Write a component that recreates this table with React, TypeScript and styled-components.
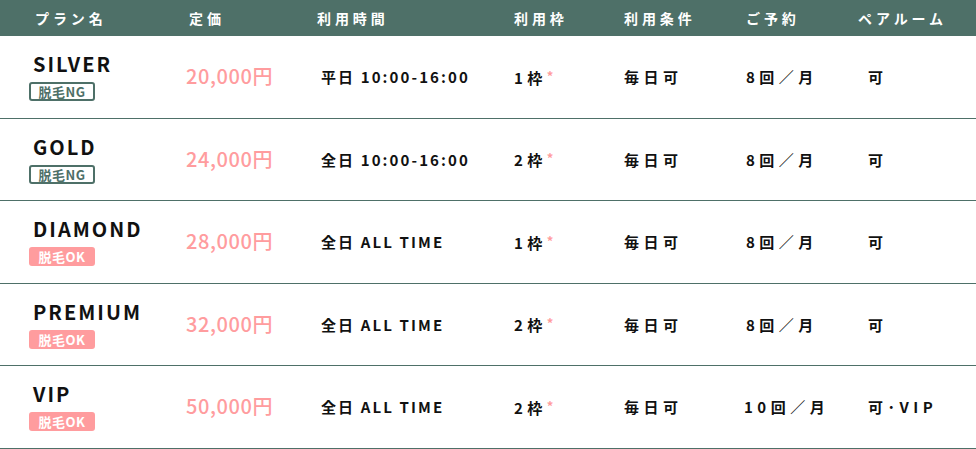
import React from 'react';
import styled, { createGlobalStyle } from 'styled-components';

const GlobalStyle = createGlobalStyle`
  html, body {
    margin: 0;
    padding: 0;
    background: #ffffff;
  }
  body {
    font-family: "Noto Sans CJK JP", "Noto Sans", sans-serif;
    color: #111111;
  }
`;

const green = '#4e7068';
const pink = '#ff9c9e';

const cols = '186px 131px 193px 110px 124px 111px 1fr';

const Table = styled.div`
  width: 976px;
`;

const HeadRow = styled.div`
  display: grid;
  grid-template-columns: ${cols};
  height: 36px;
  background: ${green};
  align-items: center;
`;

const HeadCell = styled.div<{ pad: number }>`
  padding-left: ${p => p.pad}px;
  color: #ffffff;
  font-size: 14px;
  font-weight: 700;
  letter-spacing: 0.28em;
  line-height: 1;
  white-space: nowrap;
`;

const Row = styled.div`
  display: grid;
  grid-template-columns: ${cols};
  height: 82.5px;
  box-sizing: border-box;
  border-bottom: 1px solid ${green};
  align-items: center;
`;

const NameCell = styled.div`
  padding-left: 29px;
  display: flex;
  flex-direction: column;
  align-items: flex-start;
  gap: 7px;
  margin-top: 1px;
`;

const PlanName = styled.div`
  padding-left: 4px;
  font-size: 20px;
  font-weight: 700;
  letter-spacing: 0.1em;
  line-height: 22px;
  color: #111111;
`;

const Badge = styled.span<{ ok: boolean }>`
  display: inline-flex;
  align-items: center;
  justify-content: center;
  box-sizing: border-box;
  width: 66px;
  height: 19px;
  border-radius: 3px;
  font-size: 13px;
  font-weight: 700;
  letter-spacing: 0.04em;
  line-height: 1;
  border: 2px solid ${p => (p.ok ? pink : green)};
  background: ${p => (p.ok ? pink : '#ffffff')};
  color: ${p => (p.ok ? '#ffffff' : green)};
`;

const Price = styled.div`
  font-size: 20px;
  font-weight: 500;
  color: ${pink};
  letter-spacing: 0.03em;
  margin-top: -2px;
  white-space: nowrap;
`;

const Cell = styled.div<{ pad: number; wide?: boolean }>`
  padding-left: ${p => p.pad}px;
  font-size: 15px;
  font-weight: 700;
  letter-spacing: ${p => (p.wide ? '0.3em' : '0.14em')};
  white-space: nowrap;
  color: #111111;
`;

const Mark = styled.span`
  color: ${pink};
  font-size: 13px;
  vertical-align: 3px;
  letter-spacing: 0;
`;

type Plan = {
  name: string;
  ok: boolean;
  price: string;
  time: string;
  slot: string;
  reserve: string;
  pair: string;
};

const plans: Plan[] = [
  { name: 'SILVER', ok: false, price: '20,000円', time: '平日 10:00-16:00', slot: '1枠', reserve: '8回／月', pair: '可' },
  { name: 'GOLD', ok: false, price: '24,000円', time: '全日 10:00-16:00', slot: '2枠', reserve: '8回／月', pair: '可' },
  { name: 'DIAMOND', ok: true, price: '28,000円', time: '全日 ALL TIME', slot: '1枠', reserve: '8回／月', pair: '可' },
  { name: 'PREMIUM', ok: true, price: '32,000円', time: '全日 ALL TIME', slot: '2枠', reserve: '8回／月', pair: '可' },
  { name: 'VIP', ok: true, price: '50,000円', time: '全日 ALL TIME', slot: '2枠', reserve: '10回／月', pair: '可･VIP' },
];

const headers: [string, number][] = [
  ['プラン名', 35],
  ['定価', 3],
  ['利用時間', 0],
  ['利用枠', 4],
  ['利用条件', 4],
  ['ご予約', 2],
  ['ペアルーム', 3],
];

export default function App() {
  return (
    <>
      <GlobalStyle />
      <Table>
        <HeadRow>
          {headers.map(([label, pad]) => (
            <HeadCell key={label} pad={pad}>{label}</HeadCell>
          ))}
        </HeadRow>
        {plans.map(p => (
          <Row key={p.name}>
            <NameCell>
              <PlanName>{p.name}</PlanName>
              <Badge ok={p.ok}>{p.ok ? '脱毛OK' : '脱毛NG'}</Badge>
            </NameCell>
            <Price>{p.price}</Price>
            <Cell pad={4}>{p.time}</Cell>
            <Cell pad={4} wide>
              {p.slot}
              <Mark>*</Mark>
            </Cell>
            <Cell pad={4} wide>毎日可</Cell>
            <Cell pad={p.reserve.length > 4 ? 0 : 2} wide>{p.reserve}</Cell>
            <Cell pad={13} wide>{p.pair}</Cell>
          </Row>
        ))}
      </Table>
    </>
  );
}
